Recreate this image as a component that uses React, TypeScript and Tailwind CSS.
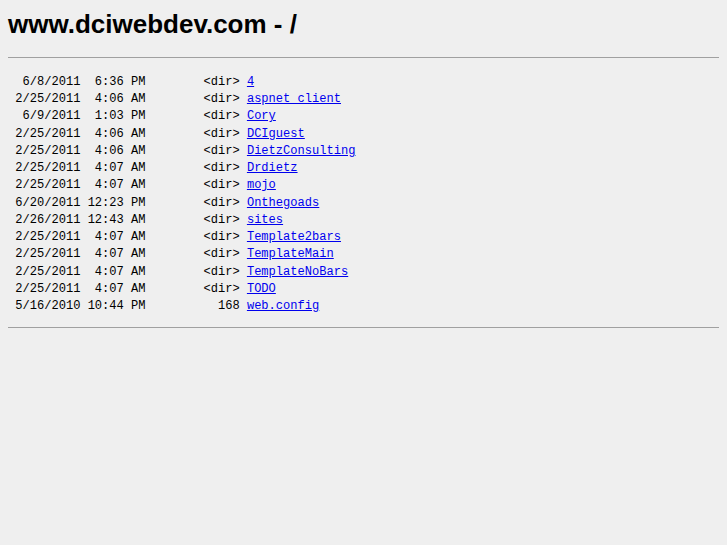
const rows: [string, string, string][] = [
  [" 6/8/2011  6:36 PM", "<dir>", "4"],
  ["2/25/2011  4:06 AM", "<dir>", "aspnet_client"],
  [" 6/9/2011  1:03 PM", "<dir>", "Cory"],
  ["2/25/2011  4:06 AM", "<dir>", "DCIguest"],
  ["2/25/2011  4:06 AM", "<dir>", "DietzConsulting"],
  ["2/25/2011  4:07 AM", "<dir>", "Drdietz"],
  ["2/25/2011  4:07 AM", "<dir>", "mojo"],
  ["6/20/2011 12:23 PM", "<dir>", "Onthegoads"],
  ["2/26/2011 12:43 AM", "<dir>", "sites"],
  ["2/25/2011  4:07 AM", "<dir>", "Template2bars"],
  ["2/25/2011  4:07 AM", "<dir>", "TemplateMain"],
  ["2/25/2011  4:07 AM", "<dir>", "TemplateNoBars"],
  ["2/25/2011  4:07 AM", "<dir>", "TODO"],
  ["5/16/2010 10:44 PM", "168", "web.config"],
];

export default function App() {
  return (
    <div className="min-h-[545px] bg-[#efefef] px-2 pt-[8px] text-black">
      <h1 className="font-['Liberation_Sans',Arial,sans-serif] text-[26px] font-bold leading-[32px]">
        www.dciwebdev.com - /
      </h1>
      <hr className="mt-[17px] border-t border-[#a0a0a0]" />
      <pre className="mt-[16px] font-['Liberation_Mono','Courier_New',monospace] text-[12.07px] leading-[17.23px]">
        {rows.map(([d, s, n]) => (
          <div key={n}>
            {" " + d.padStart(18, " ") + s.padStart(13, " ") + " "}
            <a href="#" className="text-[#0000ee] underline">
              {n}
            </a>
          </div>
        ))}
      </pre>
      <hr className="mt-[12px] border-t border-[#a0a0a0]" />
    </div>
  );
}
